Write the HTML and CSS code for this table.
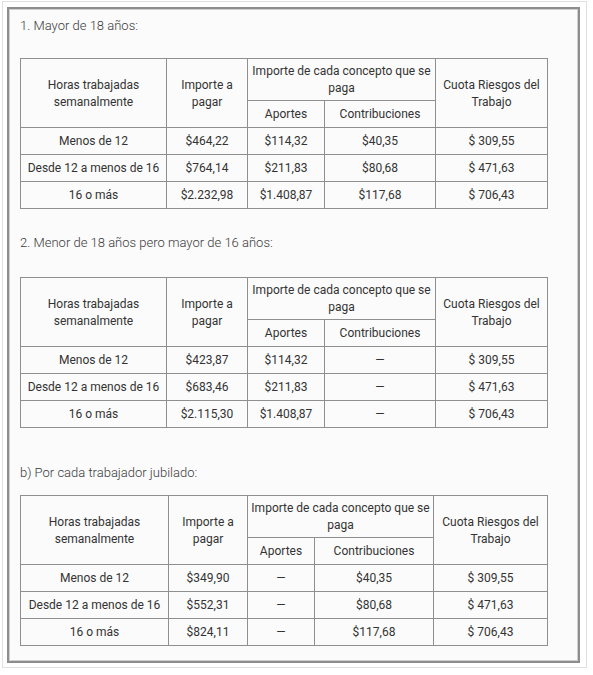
FILE: index.html
```html
<!DOCTYPE html>
<html lang="es">
<head>
<meta charset="utf-8">
<title>Tablas</title>
<link rel="stylesheet" href="styles.css">
</head>
<body>
<div class="outer">
  <div class="frame">
    <p class="heading h1">1. Mayor de 18 años:</p>
    <table class="tbl">
      <colgroup>
        <col class="c1"><col class="c2"><col class="c3"><col class="c4"><col class="c5">
      </colgroup>
      <tr class="hrow">
        <td rowspan="2">Horas trabajadas<br>semanalmente</td>
        <td rowspan="2">Importe a<br>pagar</td>
        <td colspan="2">Importe de cada concepto que se<br>paga</td>
        <td rowspan="2">Cuota Riesgos del<br>Trabajo</td>
      </tr>
      <tr class="row"><td>Aportes</td><td>Contribuciones</td></tr>
      <tr class="row"><td>Menos de 12</td><td>$464,22</td><td>$114,32</td><td>$40,35</td><td>$ 309,55</td></tr>
      <tr class="row"><td>Desde 12 a menos de 16</td><td>$764,14</td><td>$211,83</td><td>$80,68</td><td>$ 471,63</td></tr>
      <tr class="row"><td>16 o más</td><td>$2.232,98</td><td>$1.408,87</td><td>$117,68</td><td>$ 706,43</td></tr>
    </table>

    <p class="heading h2">2. Menor de 18 años pero mayor de 16 años:</p>
    <table class="tbl">
      <colgroup>
        <col class="c1"><col class="c2"><col class="c3"><col class="c4"><col class="c5">
      </colgroup>
      <tr class="hrow">
        <td rowspan="2">Horas trabajadas<br>semanalmente</td>
        <td rowspan="2">Importe a<br>pagar</td>
        <td colspan="2">Importe de cada concepto que se<br>paga</td>
        <td rowspan="2">Cuota Riesgos del<br>Trabajo</td>
      </tr>
      <tr class="row"><td>Aportes</td><td>Contribuciones</td></tr>
      <tr class="row"><td>Menos de 12</td><td>$423,87</td><td>$114,32</td><td>—</td><td>$ 309,55</td></tr>
      <tr class="row"><td>Desde 12 a menos de 16</td><td>$683,46</td><td>$211,83</td><td>—</td><td>$ 471,63</td></tr>
      <tr class="row"><td>16 o más</td><td>$2.115,30</td><td>$1.408,87</td><td>—</td><td>$ 706,43</td></tr>
    </table>

    <p class="heading h3">b) Por cada trabajador jubilado:</p>
    <table class="tbl">
      <colgroup>
        <col class="d1"><col class="d2"><col class="d3"><col class="d4"><col class="d5">
      </colgroup>
      <tr class="hrow">
        <td rowspan="2">Horas trabajadas<br>semanalmente</td>
        <td rowspan="2">Importe a<br>pagar</td>
        <td colspan="2">Importe de cada concepto que se<br>paga</td>
        <td rowspan="2">Cuota Riesgos del<br>Trabajo</td>
      </tr>
      <tr class="row"><td>Aportes</td><td>Contribuciones</td></tr>
      <tr class="row"><td>Menos de 12</td><td>$349,90</td><td>—</td><td>$40,35</td><td>$ 309,55</td></tr>
      <tr class="row"><td>Desde 12 a menos de 16</td><td>$552,31</td><td>—</td><td>$80,68</td><td>$ 471,63</td></tr>
      <tr class="row"><td>16 o más</td><td>$824,11</td><td>—</td><td>$117,68</td><td>$ 706,43</td></tr>
    </table>
  </div>
</div>
</body>
</html>
```

FILE: styles.css
```css
html, body {
  margin: 0;
  padding: 0;
  background: #ffffff;
}

body {
  font-family: Roboto, "Liberation Sans", Arial, sans-serif;
  color: #333333;
}

.outer {
  box-sizing: border-box;
  width: 585px;
  height: 667px;
  margin: 1px 0 0 2px;
  padding: 5px 5px 4px 4px;
  border: 1px solid #e0e0e0;
  background: #ffffff;
}

.frame {
  box-sizing: border-box;
  width: 573px;
  height: 656px;
  border: 2px solid #8d8d8d;
  box-shadow: inset 0 0 0 1px #cfcfcf;
  background: #fbfbfb;
  padding: 7px 0 0 11px;
}

.heading {
  margin: 0;
  font-size: 13px;
  line-height: 20px;
  font-weight: 300;
  color: #3a3a3a;
}

.h1 { margin-bottom: 22px; }
.h2 { margin-top: 24px; margin-bottom: 24px; }
.h3 { margin-top: 35px; margin-bottom: 12px; }

.tbl {
  border-collapse: collapse;
  table-layout: fixed;
  width: 528px;
  font-size: 12px;
  line-height: 17px;
  color: #333333;
}

.tbl td {
  border: 1px solid #8f8f8f;
  text-align: center;
  vertical-align: middle;
  padding: 5px 3px 4px;
  white-space: nowrap;
}

.hrow td {
  padding: 4px 3px 3px;
}

.c1 { width: 146px; }
.c2 { width: 81px; }
.c3 { width: 77px; }
.c4 { width: 111px; }
.c5 { width: 112px; }

.d1 { width: 148px; }
.d2 { width: 79px; }
.d3 { width: 67px; }
.d4 { width: 119px; }
.d5 { width: 114px; }
```
